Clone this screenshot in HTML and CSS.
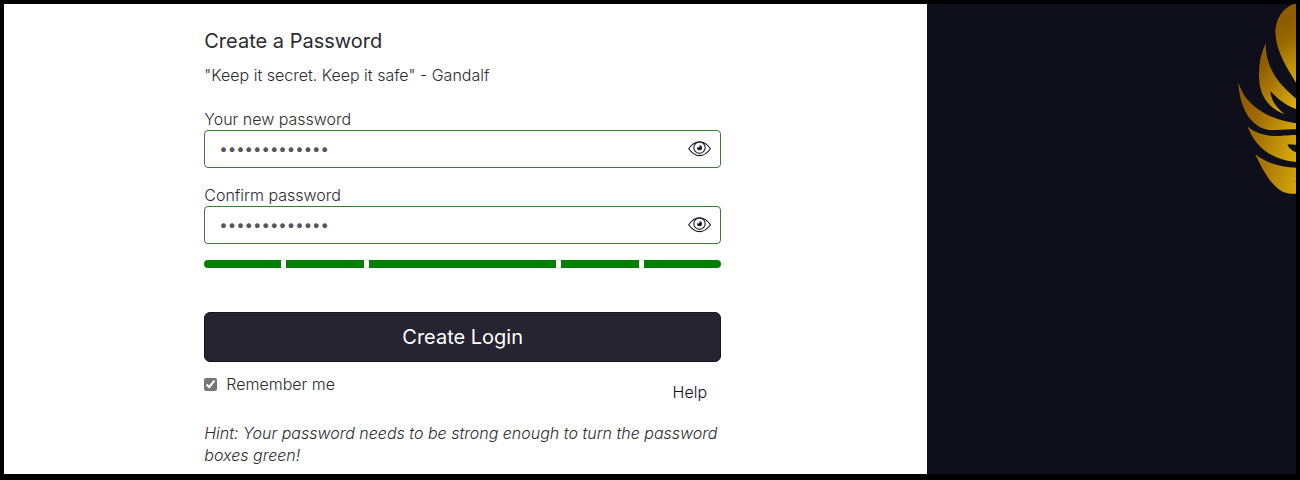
FILE: index.html
```html
<!DOCTYPE html>
<html lang="en">
<head>
<meta charset="utf-8">
<meta name="viewport" content="width=device-width, initial-scale=1">
<title>Create a Password</title>
<link rel="stylesheet" href="styles.css">
</head>
<body>
<div class="page">
  <main class="panel">
    <form class="form">
      <h1 class="title">Create a Password</h1>
      <p class="quote">"Keep it secret. Keep it safe" - Gandalf</p>
      <div class="field">
        <label class="label" for="new-password">Your new password</label>
        <div class="box">
          <input class="input" id="new-password" type="password" value="abcdefghijklm" autocomplete="new-password">
          <button class="reveal" type="button" aria-label="Show new password">
            <svg class="eye" viewBox="0 0 24 16" aria-hidden="true"><path d="M.7 7.700Q5.500.7 11.500.7T22.500 7.700Q17.500 14.600 11.500 14.600T.7 7.700Z"/><circle cx="11.500" cy="6.700" r="5.700"/><circle class="pupil" cx="11.500" cy="6.700" r="2.500"/><circle class="glint" cx="10.200" cy="5.300" r="1.300"/></svg>
          </button>
        </div>
      </div>
      <div class="field">
        <label class="label" for="confirm-password">Confirm password</label>
        <div class="box">
          <input class="input" id="confirm-password" type="password" value="abcdefghijklm" autocomplete="new-password">
          <button class="reveal" type="button" aria-label="Show confirmed password">
            <svg class="eye" viewBox="0 0 24 16" aria-hidden="true"><path d="M.7 7.700Q5.500.7 11.500.7T22.500 7.700Q17.500 14.600 11.500 14.600T.7 7.700Z"/><circle cx="11.500" cy="6.700" r="5.700"/><circle class="pupil" cx="11.500" cy="6.700" r="2.500"/><circle class="glint" cx="10.200" cy="5.300" r="1.300"/></svg>
          </button>
        </div>
      </div>
      <div class="strength" role="img" aria-label="Password strength">
        <span class="bar"></span><span class="bar"></span><span class="bar"></span><span class="bar"></span><span class="bar"></span>
      </div>
      <button class="submit" type="submit">Create Login</button>
      <div class="options">
        <label class="remember"><input class="check" type="checkbox" checked>Remember me</label>
        <a class="help" href="#help">Help</a>
      </div>
      <p class="hint">Hint: Your password needs to be strong enough to turn the password boxes green!</p>
    </form>
  </main>
  <aside class="brand">
    <svg class="wings" viewBox="108 12 180 576" aria-hidden="true">
      <defs>
        <linearGradient id="g1" gradientUnits="userSpaceOnUse" x1="235" y1="80" x2="330" y2="230"><stop offset="0" stop-color="#8f5d00"/><stop offset=".25" stop-color="#986700"/><stop offset="1" stop-color="#dbae0c"/></linearGradient>
        <linearGradient id="g2" gradientUnits="userSpaceOnUse" x1="175" y1="215" x2="290" y2="310"><stop offset="0" stop-color="#8f5d00"/><stop offset=".4" stop-color="#ac7904"/><stop offset="1" stop-color="#dbae0e"/></linearGradient>
        <linearGradient id="g3" gradientUnits="userSpaceOnUse" x1="130" y1="300" x2="300" y2="385"><stop offset="0" stop-color="#8f5d00"/><stop offset=".3" stop-color="#9d6a02"/><stop offset="1" stop-color="#dbae0e"/></linearGradient>
        <linearGradient id="g4" gradientUnits="userSpaceOnUse" x1="155" y1="410" x2="300" y2="455"><stop offset="0" stop-color="#9d6b02"/><stop offset="1" stop-color="#dbae0e"/></linearGradient>
        <linearGradient id="g5" gradientUnits="userSpaceOnUse" x1="185" y1="520" x2="300" y2="560"><stop offset="0" stop-color="#a87504"/><stop offset="1" stop-color="#d9ab0c"/></linearGradient>
      </defs>
      <path fill="url(#g1)" d="M288 12H280C244 28 228 58 226 94C227 148 253 193 288 248Z"/>
      <path fill="url(#g2)" d="M197 130C182 162 176 194 177 225C176 288 208 326 254 342C232 325 213 303 211 272C230 294 254 314 288 327V296C237 253 197 206 197 130Z"/>
      <path fill="url(#g3)" d="M115 247C119 325 151 379 205 390C231 391 260 386 288 388V370C211 359 137 322 115 247Z"/>
      <path fill="url(#g4)" d="M143 380C163 434 210 480 288 486V457C275 452 264 443 263 433L288 434V405C251 406 231 410 211 407C184 403 162 396 143 380Z"/>
      <path fill="url(#g5)" d="M166 463C191 516 225 582 273 581H288V503C245 501 202 492 166 463Z"/>
      <path fill="#a87504" d="M280 544L288 542V546Z"/>
    </svg>
  </aside>
</div>
</body>
</html>
```
FILE: styles.css
```css
* { box-sizing: border-box; }

body {
  margin: 0;
  background: #000;
  color: #2b2b30;
  font: 300 16px/22px Inter, "Liberation Sans", sans-serif;
}

.page {
  display: grid;
  grid-template-columns: 5fr 2fr;
  min-height: 100vh;
  border: 4px solid #000;
  border-bottom-width: 6px;
}

.panel {
  background: #fff;
  padding: 24px 22.3% 8px 21.7%;
}

.title {
  margin: 0;
  font-size: 20px;
  font-weight: 400;
  line-height: 26px;
}

.quote { margin: 10px 0 22px; }

.field { margin-bottom: 16px; }

.label { display: block; }

.box {
  display: flex;
  align-items: center;
  height: 38px;
  padding: 0 8px 0 14px;
  border: 1px solid #3b7a3b;
  border-radius: 4px;
}

.input {
  flex: 1;
  min-width: 0;
  padding: 0;
  border: 0;
  outline: 0;
  background: none;
  color: #55555a;
  font: 400 15px/22px Inter, sans-serif;
}

.reveal {
  display: flex;
  padding: 0;
  border: 0;
  background: none;
  cursor: pointer;
}

.eye {
  width: 24px;
  height: 16px;
  fill: none;
  stroke: #171722;
  stroke-width: 1.1;
}

.eye .pupil { fill: #171722; stroke: none; }
.eye .glint { fill: #fff; stroke: none; }

.strength {
  display: grid;
  grid-template-columns: 77fr 78fr 187fr 78fr 77fr;
  gap: 5px;
  height: 8px;
}

.bar { background: #008000; }
.bar:first-child { border-radius: 4px 0 0 4px; }
.bar:last-child { border-radius: 0 4px 4px 0; }

.submit {
  display: block;
  width: 100%;
  height: 50px;
  margin-top: 44px;
  border: 1px solid #151420;
  border-radius: 6px;
  background: #252430;
  color: #fff;
  font: 400 20px/26px Inter, sans-serif;
}

.options {
  display: flex;
  justify-content: space-between;
  align-items: flex-start;
  padding: 11px 14px 0 0;
}

.remember {
  display: flex;
  align-items: center;
  gap: 9px;
}

.check {
  width: 13px;
  height: 13px;
  margin: 0;
  accent-color: #767676;
}

.help {
  margin-top: 8px;
  color: #0f0e1b;
  text-decoration: none;
}

.hint {
  margin: 19px 0 0;
  font-style: italic;
}

.brand {
  display: flex;
  justify-content: flex-end;
  align-items: flex-start;
  background: #0f0e1b;
}

.wings {
  width: 60px;
  height: 192px;
}
```
